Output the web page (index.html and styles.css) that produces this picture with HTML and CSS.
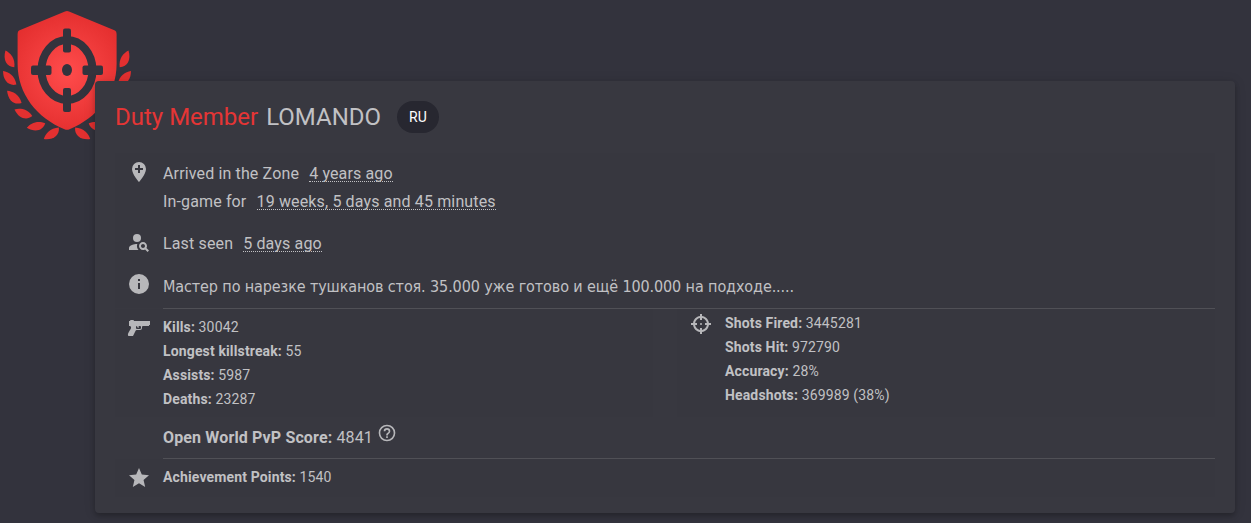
FILE: index.html
```
<!DOCTYPE html>
<html lang="en">
<head>
  <meta charset="UTF-8">
  <meta name="viewport" content="width=device-width, initial-scale=1.0">
  <title>LOMANDO</title>
  <link rel="stylesheet" href="styles.css">
</head>
<body>
  <svg class="emblem" viewBox="0 0 134 150">
    <defs>
      <radialGradient id="red" gradientUnits="userSpaceOnUse" cx="67" cy="72" r="72">
        <stop offset="0" stop-color="#ff4c4c" />
        <stop offset="1" stop-color="#e02a2a" />
      </radialGradient>
      <path id="leaf" d="M-4 -9C1 -6.500 6 -1 4.800 7.800C-3 7.500 -6.800 0 -4 -9Z" />
      <g id="laurel">
        <use href="#leaf" transform="translate(9.5 59.5)" />
        <use href="#leaf" transform="translate(9.5 78.5) rotate(-17)" />
        <use href="#leaf" transform="translate(14.2 97.5) rotate(-22)" />
        <use href="#leaf" transform="translate(23.5 113.5) rotate(-42)" />
        <use href="#leaf" transform="translate(36.5 126) rotate(-76)" />
        <use href="#leaf" transform="translate(52 133.5) rotate(-100)" />
      </g>
    </defs>
    <g fill="url(#red)">
      <path d="M65 11.6Q67 10.6 69 11.6L115 30.6Q116.600 31.500 116.600 34V64C116.600 94 97 118 69.500 129.200Q67 130.300 64.500 129.200C37 118 17.600 94 17.600 64V34Q17.600 31.500 19 30.600Z" />
    </g>
    <g fill="#e33030">
      <use href="#laurel" />
      <use href="#laurel" transform="matrix(-1 0 0 1 134 0)" />
    </g>
    <ellipse cx="67" cy="70" rx="25.500" ry="30" fill="none" stroke="#33333d" stroke-width="8" />
    <g fill="#33333d">
      <ellipse cx="67" cy="70" rx="5" ry="6" />
      <rect x="63" y="28.500" width="8" height="24" rx="2" />
      <rect x="63" y="88" width="8" height="24" rx="2" />
      <rect x="31" y="65.500" width="20.500" height="9.500" rx="2" />
      <rect x="82.500" y="65.500" width="20.500" height="9.500" rx="2" />
    </g>
  </svg>

  <main class="card">
    <header class="title">
      <h1><span class="rank">Duty Member</span> LOMANDO</h1>
      <span class="chip">RU</span>
    </header>

    <section class="info">
      <div class="row">
        <svg class="icon" viewBox="0 0 24 24"><path d="M12,2A7,7 0 0,1 19,9C19,14.250 12,22 12,22C12,22 5,14.250 5,9A7,7 0 0,1 12,2M11,5V8H8V10H11V13H13V10H16V8H13V5H11Z" /></svg>
        <div>
          <p>Arrived in the Zone <span class="date">4 years ago</span></p>
          <p>In-game for <span class="date">19 weeks, 5 days and 45 minutes</span></p>
        </div>
      </div>
      <div class="row">
        <svg class="icon" viewBox="0 0 24 24"><circle cx="10" cy="8" r="4" /><path d="M10.350 14.010C7.620 13.910 2 15.270 2 18v2h9.540c-2.470-2.760-1.230-5.890-1.190-5.990z" /><path d="M19.430 18.020c.36-.59.57-1.280.57-2.020 0-2.210-1.790-4-4-4s-4 1.790-4 4 1.790 4 4 4c.74 0 1.430-.22 2.020-.57L20.590 22 22 20.590l-2.570-2.570zM16 18c-1.100 0-2-.9-2-2s.9-2 2-2 2 .9 2 2-.9 2-2 2z" /></svg>
        <p>Last seen <span class="date">5 days ago</span></p>
      </div>
      <div class="row about">
        <svg class="icon" viewBox="0 0 24 24"><path d="M13,9H11V7H13M13,17H11V11H13M12,2A10,10 0 0,0 2,12A10,10 0 0,0 12,22A10,10 0 0,0 22,12A10,10 0 0,0 12,2Z" /></svg>
        <p>Мастер по нарезке тушканов стоя. 35.000 уже готово и ещё 100.000 на подходе.....</p>
      </div>
    </section>

    <hr>

    <section class="stats">
      <div class="row kills">
        <svg class="icon" viewBox="0 0 24 24"><path d="M7,5H23V9H22V10H16A1,1 0 0,0 15,11V12A2,2 0 0,1 13,14H9.620C9.240,14 8.890,14.220 8.720,14.560L6.270,19.450C6.100,19.790 5.760,20 5.380,20H2C2,20 -1,20 3,14C3,14 6,10 2,10V5H3L3.500,4H6.500L7,5M14,12V11A1,1 0 0,0 13,10H12C12,10 11,11 12,12A2,2 0 0,1 10,10A1,1 0 0,0 9,11V12A1,1 0 0,0 10,13H13A1,1 0 0,0 14,12Z" /></svg>
        <div>
          <p><b>Kills:</b> 30042</p>
          <p><b>Longest killstreak:</b> 55</p>
          <p><b>Assists:</b> 5987</p>
          <p><b>Deaths:</b> 23287</p>
        </div>
      </div>
      <div class="row shots">
        <svg class="icon" viewBox="0 0 24 24"><path d="M11,2V4.070C7.380,4.530 4.530,7.380 4.070,11H2V13H4.070C4.530,16.620 7.380,19.470 11,19.930V22H13V19.930C16.620,19.470 19.470,16.620 19.930,13H22V11H19.930C19.470,7.380 16.620,4.530 13,4.070V2M11,6.080V8H13V6.090C15.500,6.500 17.500,8.500 17.920,11H16V13H17.910C17.500,15.500 15.500,17.500 13,17.920V16H11V17.910C8.500,17.500 6.500,15.500 6.080,13H8V11H6.090C6.500,8.500 8.500,6.500 11,6.080M12,11A1,1 0 0,0 11,12A1,1 0 0,0 12,13A1,1 0 0,0 13,12A1,1 0 0,0 12,11Z" /></svg>
        <div>
          <p><b>Shots Fired:</b> 3445281</p>
          <p><b>Shots Hit:</b> 972790</p>
          <p><b>Accuracy:</b> 28%</p>
          <p><b>Headshots:</b> 369989 (38%)</p>
        </div>
      </div>
    </section>

    <p class="score">
      <b>Open World PvP Score:</b> 4841
      <svg class="help" viewBox="0 0 24 24"><path d="M11,18H13V16H11V18M12,2A10,10 0 0,0 2,12A10,10 0 0,0 12,22A10,10 0 0,0 22,12A10,10 0 0,0 12,2M12,20C7.590,20 4,16.410 4,12C4,7.590 7.590,4 12,4C16.410,4 20,7.590 20,12C20,16.410 16.410,20 12,20M12,6A4,4 0 0,0 8,10H10A2,2 0 0,1 12,8A2,2 0 0,1 14,10C14,12 11,11.750 11,15H13C13,12.750 16,12.500 16,10A4,4 0 0,0 12,6Z" /></svg>
    </p>

    <hr>

    <section class="row points">
      <svg class="icon" viewBox="0 0 24 24"><path d="M12,17.270L18.180,21L16.540,13.970L22,9.240L14.810,8.620L12,2L9.190,8.620L2,9.240L7.450,13.970L5.820,21L12,17.270Z" /></svg>
      <p><b>Achievement Points:</b> 1540</p>
    </section>
  </main>
</body>
</html>
```
FILE: styles.css
```
:root {
	--page: #33333d;
	--card: #383840;
	--panel: #37373f;
	--text: #c1c1c4;
	--icon: #b7b7ba;
	--line: #505056;
	--red: #e53535;
}

* {
	box-sizing: border-box;
}

body {
	margin: 0;
	height: 100vh;
	padding: 81px 16px 10px 95px;
	overflow: hidden;
	background: var(--page);
	color: var(--text);
	font-family: Roboto, sans-serif;
	font-size: 16px;
	line-height: 28px;
}

h1,
p {
	margin: 0;
}

p {
	letter-spacing: 0.14px;
}

b {
	font-weight: 700;
}

.emblem {
	position: absolute;
	top: 0;
	left: 0;
	width: 134px;
	height: 150px;
}

.card {
	position: relative;
	height: 432px;
	padding: 20px;
	background: var(--card);
	border-radius: 4px;
	box-shadow: 0 3px 5px rgba(0, 0, 0, 0.2), 0 1px 12px rgba(0, 0, 0, 0.14);
}

.title {
	display: flex;
	align-items: center;
	gap: 16px;
	height: 32px;
	margin-bottom: 20px;
}

h1 {
	font-size: 24px;
	font-weight: 400;
	line-height: 32px;
}

.rank {
	color: var(--red);
	margin-right: 2px;
}

.chip {
	padding: 0 12px;
	border-radius: 16px;
	background: #272730;
	color: #fff;
	font-size: 14px;
	line-height: 32px;
}

.info {
	height: 155px;
	padding-top: 7px;
	background: var(--panel);
}

.row {
	display: flex;
	align-items: flex-start;
}

.info .row {
	margin-bottom: 14px;
}

.icon {
	flex: none;
	width: 24px;
	height: 24px;
	margin: 1px 12px 0;
	fill: var(--icon);
}

.info .icon {
	margin-top: 0;
}

.date {
	display: inline-block;
	margin-left: 6px;
	border-bottom: 1px dotted var(--text);
	line-height: 14px;
}

.info .about {
	margin: 0;
}

.about p {
	margin-top: 1px;
	font-family: "DejaVu Sans Condensed", "DejaVu Sans", sans-serif;
	font-stretch: condensed;
	letter-spacing: -0.11px;
}

hr {
	height: 1px;
	margin: 0 0 0 48px;
	border: 0;
	background: var(--line);
}

.stats {
	display: grid;
	grid-template-columns: 1fr 1fr;
	gap: 24px;
	height: 108px;
}

.stats .row,
.points {
	background: var(--panel);
	font-size: 14px;
	line-height: 24px;
}

.kills {
	padding-top: 6px;
}

.shots {
	padding-top: 2px;
}

.score {
	height: 41px;
	padding: 6px 0 0 48px;
}

.help {
	width: 20px;
	height: 20px;
	fill: var(--icon);
}

.points {
	height: 38px;
	padding-top: 6px;
}
```
